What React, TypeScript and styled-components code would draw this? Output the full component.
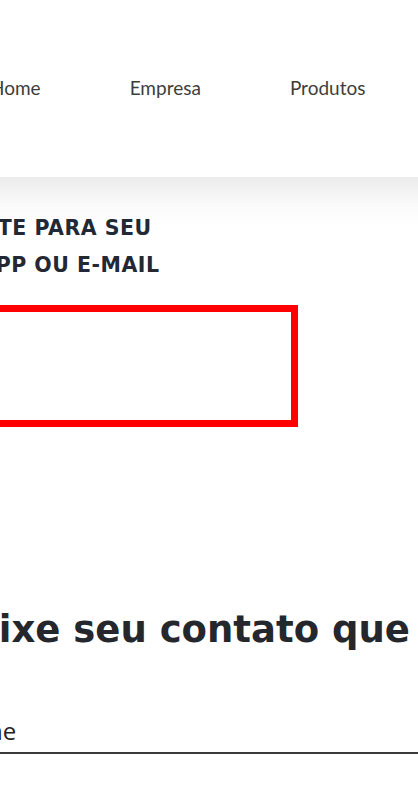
import styled, { createGlobalStyle } from "styled-components";

const GlobalStyle = createGlobalStyle`
  html, body {
    margin: 0;
    padding: 0;
    background: #ffffff;
    overflow: hidden;
  }
  body {
    font-family: Lato, "Open Sans", sans-serif;
  }
`;

const navItems = ["Home", "Empresa", "Produtos", "Contato"];

export default function App() {
  return (
    <>
      <GlobalStyle />
      <Viewport>
        <Header>
          <Nav>
            {navItems.map((item) => (
              <NavLink key={item}>{item}</NavLink>
            ))}
          </Nav>
        </Header>
        <Hero>
          <Headline>
            <HeadLine $offset={-141}>DIRETAMENTE PARA SEU</HeadLine>
            <HeadLine $offset={-106}>WHATSAPP OU E-MAIL</HeadLine>
          </Headline>
          <FrameBox />
        </Hero>
        <ContactSection>
          <ContactTitle>Deixe seu contato que retornaremos</ContactTitle>
          <Field>
            <FieldLabel>Nome</FieldLabel>
          </Field>
        </ContactSection>
      </Viewport>
    </>
  );
}

const Viewport = styled.div`
  width: 418px;
  height: 800px;
  overflow: hidden;
  background: #ffffff;
`;

const Header = styled.header`
  height: 177px;
  display: flex;
  align-items: center;
`;

const Nav = styled.nav`
  display: flex;
  gap: 89px;
  margin-left: -10px;
  margin-top: -2px;
  white-space: nowrap;
`;

const NavLink = styled.a`
  font-family: Lato, sans-serif;
  font-size: 19px;
  color: #3d3d3d;
  text-decoration: none;
`;

const Hero = styled.section`
  background: linear-gradient(#ebebeb 0px, #fafafa 28px, #ffffff 50px);
  padding-top: 33px;
  padding-bottom: 180px;
`;

const Headline = styled.h2`
  margin: 0;
  font-family: "DejaVu Sans", sans-serif;
  font-size: 20.5px;
  font-weight: 700;
  letter-spacing: 0.5px;
  line-height: 37px;
  color: #222935;
  white-space: nowrap;
`;

const HeadLine = styled.div<{ $offset: number }>`
  margin-left: ${(p) => p.$offset}px;
`;

const FrameBox = styled.div`
  margin-top: 21px;
  margin-left: -100px;
  width: 398px;
  height: 122px;
  box-sizing: border-box;
  border: 7px solid #ff0000;
`;

const ContactSection = styled.section``;

const ContactTitle = styled.h3`
  margin: 0 0 0 -57px;
  font-family: "DejaVu Sans", sans-serif;
  font-size: 37px;
  font-weight: 700;
  line-height: 46px;
  color: #24282d;
  white-space: nowrap;
`;

const Field = styled.div`
  margin-top: 61px;
  border-bottom: 2px solid #3a3a3a;
  padding-bottom: 5px;
`;

const FieldLabel = styled.div`
  margin-left: -52px;
  font-family: "Open Sans", sans-serif;
  font-size: 24px;
  color: #222222;
`;
